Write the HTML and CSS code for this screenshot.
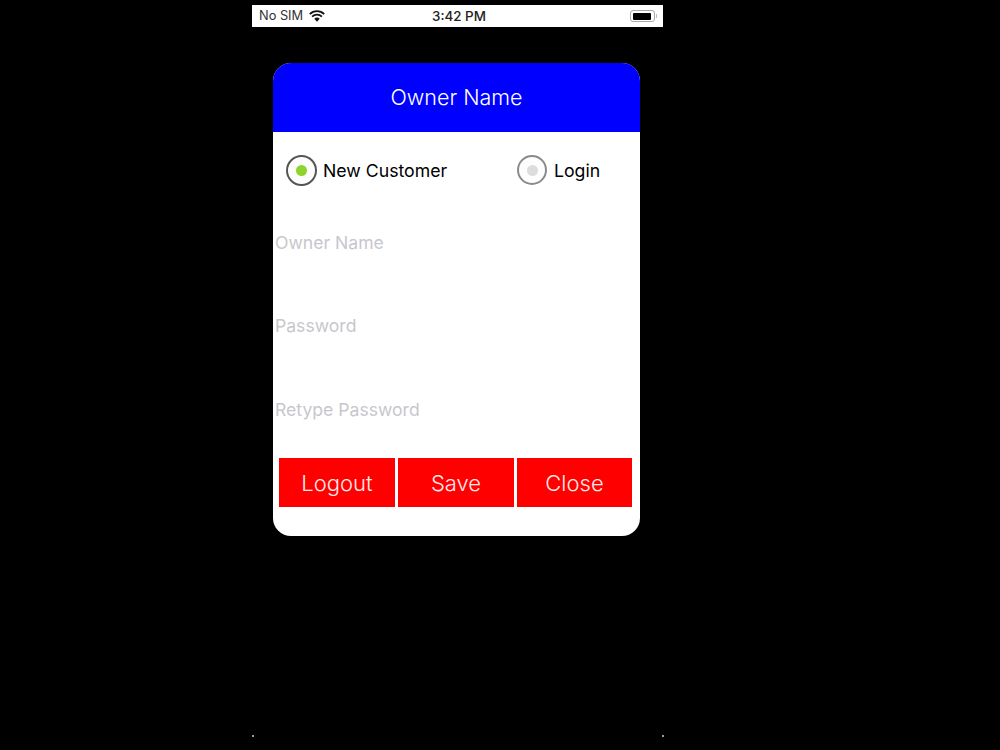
FILE: index.html
```html
<!DOCTYPE html>
<html>
<head>
    <title>Owner Name</title>
    <link rel="stylesheet" href="styles.css">
</head>

<body>
    <div id="phone">
        <div class="status-bar">
            <div class="status-left">
                <span>No SIM</span>
                <svg class="wifi" width="16" height="12" viewBox="0 0 16 12">
                    <path d="M8 11.8 5.3 8.8a3.8 3.8 0 0 1 5.4 0z" fill="#111"/>
                    <path d="M.8 4.2a10.2 10.2 0 0 1 14.4 0M3.1 6.7a7 7 0 0 1 9.8 0" fill="none" stroke="#111" stroke-width="1.8"/>
                </svg>
            </div>
            <div class="status-time">3:42 PM</div>
            <div class="battery"><div class="battery-level"></div></div>
            <div class="battery-tip"></div>
        </div>

        <div class="card">
            <div class="card-header">Owner Name</div>

            <div class="radio-row">
                <div class="radio-item radio-new">
                    <div class="radio radio-on"><div class="dot"></div></div>
                    <span>New Customer</span>
                </div>
                <div class="radio-item radio-login">
                    <div class="radio radio-off"><div class="dot"></div></div>
                    <span>Login</span>
                </div>
            </div>

            <div class="fields">
                <input class="field" type="text" placeholder="Owner Name">
                <input class="field" type="password" placeholder="Password">
                <input class="field" type="password" placeholder="Retype Password">
            </div>

            <div class="buttons">
                <button>Logout</button>
                <button>Save</button>
                <button>Close</button>
            </div>
        </div>

        <div class="corner corner-left"></div>
        <div class="corner corner-right"></div>
    </div>
</body>
</html>
```

FILE: styles.css
```css
html, body {
    margin: 0;
    height: 750px;
    overflow: hidden;
    background-color: #000;
    font-family: Inter, "Liberation Sans", sans-serif;
}

#phone {
    position: relative;
    width: 411px;
    height: 745px;
    margin-left: 252px;
    padding-top: 5px;
}

.status-bar {
    display: flex;
    align-items: center;
    position: relative;
    height: 21.5px;
    padding: 0 7px;
    background-color: #fff;
    color: #333;
    font-size: 12.8px;
}

.status-left {
    display: flex;
    align-items: center;
    gap: 6px;
}

.status-time {
    position: absolute;
    left: 180px;
    font-weight: 500;
    font-size: 13.4px;
    color: #222;
}

.battery {
    position: absolute;
    left: 378px;
    top: 5px;
    width: 25px;
    height: 12px;
    box-sizing: border-box;
    padding: 1.5px;
    border: 1px solid #aaa;
    border-radius: 3px;
}

.battery-level {
    width: 18px;
    height: 100%;
    background-color: #000;
    border-radius: 1px;
}

.battery-tip {
    position: absolute;
    left: 404px;
    top: 9px;
    width: 1px;
    height: 4px;
    background-color: #bbb;
}

.card {
    width: 367px;
    height: 473px;
    margin: 36.5px 0 0 21px;
    background-color: #fff;
    border-radius: 18px;
    overflow: hidden;
}

.card-header {
    height: 69px;
    line-height: 69px;
    background-color: #0000ff;
    color: #fff;
    text-align: center;
    font-size: 21.5px;
    font-weight: 300;
}

.radio-row {
    display: flex;
    height: 76px;
    align-items: center;
    font-size: 17.7px;
    color: #000;
}

.radio-item {
    display: flex;
    align-items: center;
    gap: 6px;
}

.radio-new {
    margin-left: 13px;
    width: 231px;
}

.radio {
    display: flex;
    align-items: center;
    justify-content: center;
    width: 31px;
    height: 31px;
    box-sizing: border-box;
    border-radius: 50%;
    background-color: #fdfdfd;
}

.radio-off {
    width: 30px;
    height: 30px;
    margin-right: 1px;
    border: 2px solid #8a8a8a;
}

.radio-on {
    border: 2px solid #555;
}

.dot {
    width: 11px;
    height: 11px;
    border-radius: 50%;
}

.radio-on .dot {
    background-color: #8fd42c;
}

.radio-off .dot {
    background-color: #dcdcdc;
}

.fields {
    display: flex;
    flex-direction: column;
    height: 250px;
}

.field {
    flex: none;
    height: 83.5px;
    padding: 0 0 15px 2px;
    border: none;
    outline: none;
    background: transparent;
    font-family: inherit;
    font-size: 17.6px;
    box-sizing: border-box;
}

.field::placeholder {
    color: #c7c7cd;
    opacity: 1;
}

.buttons {
    display: grid;
    grid-template-columns: 116px 116px 115px;
    gap: 3px;
    margin-left: 6px;
}

.buttons button {
    height: 49px;
    padding: 0;
    border: none;
    background-color: #ff0000;
    color: #fdeaea;
    font-family: inherit;
    font-size: 22px;
    font-weight: 300;
}

.corner {
    position: absolute;
    top: 735px;
    width: 2px;
    height: 2px;
    background-color: #999;
}

.corner-left {
    left: 0;
}

.corner-right {
    left: 410px;
}
```
